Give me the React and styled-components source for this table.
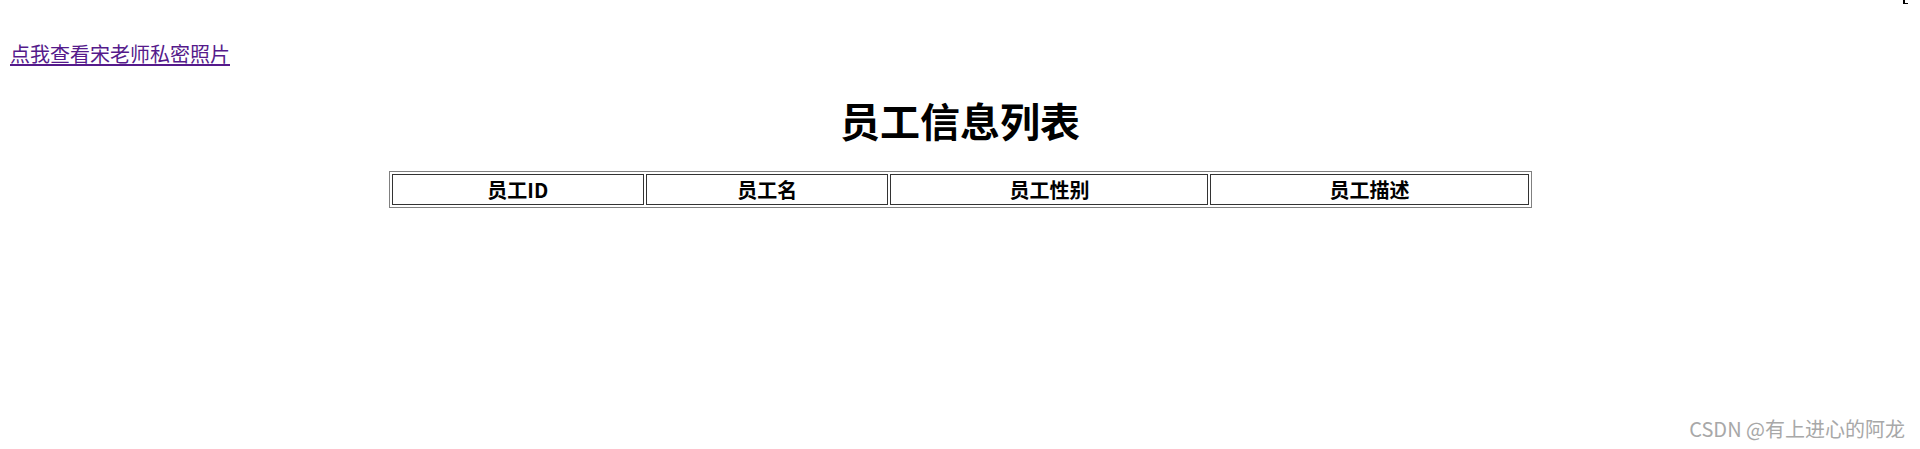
import React from "react";
import styled, { createGlobalStyle } from "styled-components";

const GlobalStyle = createGlobalStyle`
  html, body {
    margin: 0;
    padding: 0;
    background: #ffffff;
  }
  body {
    font-family: "Noto Sans CJK SC", "Liberation Sans", sans-serif;
    color: #000000;
  }
`;

const Page = styled.div`
  position: relative;
  width: 1920px;
  height: 449px;
  padding: 41px 8px 0 8px;
  box-sizing: border-box;
  overflow: hidden;
`;

const CornerMark = styled.span`
  position: absolute;
  top: 0;
  left: 1903px;
  width: 5px;
  height: 4px;
  border-left: 2px solid #000;
  border-bottom: 1px solid #000;
  box-sizing: border-box;
`;

const SecretLink = styled.a`
  display: inline-block;
  font-size: 20px;
  line-height: 26px;
  color: #551a8b;
  text-decoration: underline;
  text-underline-offset: 2px;
  padding-left: 2px;
`;

const Title = styled.h1`
  margin: 27px 0 25px;
  font-size: 40px;
  line-height: 52px;
  font-weight: 700;
  text-align: center;
`;

const Table = styled.table`
  width: 1143px;
  margin: 0 auto;
  border: 1px solid #808080;
  border-spacing: 2px;
`;

const HeadCell = styled.th`
  width: ${(p) => p.$width}px;
  border: 1px solid #333333;
  padding: 1px;
  font-size: 20px;
  line-height: 27px;
  font-weight: 700;
  text-align: center;
`;

const Watermark = styled.div`
  position: absolute;
  right: 15px;
  bottom: 8px;
  font-size: 20px;
  line-height: 24px;
  color: #a8a8a8;
  font-family: "Noto Sans CJK SC", "Open Sans", sans-serif;
`;

const columns = [
  { label: "员工ID", width: 250 },
  { label: "员工名", width: 240 },
  { label: "员工性别", width: 316 },
  { label: "员工描述", width: 316 },
];

export default function App() {
  return (
    <>
      <GlobalStyle />
      <Page>
        <CornerMark />
        <SecretLink href="#">点我查看宋老师私密照片</SecretLink>
        <Title>员工信息列表</Title>
        <Table>
          <thead>
            <tr>
              {columns.map((c) => (
                <HeadCell key={c.label} $width={c.width}>
                  {c.label}
                </HeadCell>
              ))}
            </tr>
          </thead>
        </Table>
        <Watermark>CSDN @有上进心的阿龙</Watermark>
      </Page>
    </>
  );
}
